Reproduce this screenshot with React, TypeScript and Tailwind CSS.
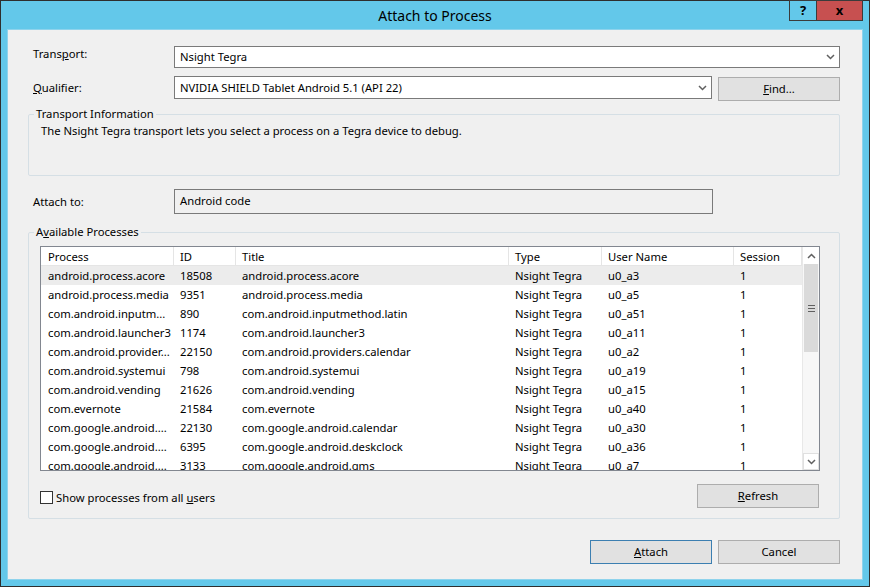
import React from 'react';

type Row = { proc: string; id: string; title: string; user: string };

const rows: Row[] = [
  { proc: 'android.process.acore', id: '18508', title: 'android.process.acore', user: 'u0_a3' },
  { proc: 'android.process.media', id: '9351', title: 'android.process.media', user: 'u0_a5' },
  { proc: 'com.android.inputm...', id: '890', title: 'com.android.inputmethod.latin', user: 'u0_a51' },
  { proc: 'com.android.launcher3', id: '1174', title: 'com.android.launcher3', user: 'u0_a11' },
  { proc: 'com.android.provider...', id: '22150', title: 'com.android.providers.calendar', user: 'u0_a2' },
  { proc: 'com.android.systemui', id: '798', title: 'com.android.systemui', user: 'u0_a19' },
  { proc: 'com.android.vending', id: '21626', title: 'com.android.vending', user: 'u0_a15' },
  { proc: 'com.evernote', id: '21584', title: 'com.evernote', user: 'u0_a40' },
  { proc: 'com.google.android....', id: '22130', title: 'com.google.android.calendar', user: 'u0_a30' },
  { proc: 'com.google.android....', id: '6395', title: 'com.google.android.deskclock', user: 'u0_a36' },
  { proc: 'com.google.android....', id: '3133', title: 'com.google.android.gms', user: 'u0_a7' },
];

const cols = ['w-[133px]', 'w-[62px]', 'w-[273px]', 'w-[93px]', 'w-[132px]', 'w-[68px]'];

const Chevron = ({ up = false }: { up?: boolean }) => (
  <svg width="9" height="6" viewBox="0 0 9 6" className={up ? 'rotate-180' : ''}>
    <path d="M1 1 L4.5 4.5 L8 1" fill="none" stroke="#606060" strokeWidth="1.5" />
  </svg>
);

const Btn = ({ children, primary = false }: { children: React.ReactNode; primary?: boolean }) => (
  <div
    className={`w-[122px] h-[24px] flex items-center justify-center bg-[#e1e1e1] border ${
      primary ? 'border-[#3c7fb1]' : 'border-[#adadad]'
    }`}
  >
    {children}
  </div>
);

export default function App() {
  return (
    <div className="relative w-[870px] h-[587px] bg-[#63c8ea] border border-[#2e2e2e] flex flex-col text-[11.25px] text-black font-['Segoe_UI','Noto_Sans',sans-serif]">
      {/* title bar */}
      <div className="h-[28px] flex items-center justify-center text-[14px]">Attach to Process</div>
      <div className="absolute top-[-1px] right-[6px] flex">
        <div className="w-[28px] h-[21px] border border-[#3b3b3b] flex items-center justify-center font-bold text-[13px] leading-none">
          ?
        </div>
        <div className="w-[46px] h-[21px] border border-l-0 border-[#3b3b3b] bg-[#c75050] flex items-center justify-center font-bold text-[13px] leading-none">
          x
        </div>
      </div>

      {/* client area */}
      <div className="mx-[6px] mb-[6px] flex-1 border border-[#8fd3ec] bg-[#f0f0f0] flex flex-col pl-[20px] pr-[22px] leading-[16px]">
        <div className="mt-[16px] h-[22px] flex">
          <div className="w-[146px] pl-[5px] pt-0">
            Trans<span className="underline">p</span>ort:
          </div>
          <div className="flex-1 bg-white border border-[#7a7a7a] flex items-center justify-between pl-[5px] pr-[4px]">
            <span>Nsight Tegra</span>
            <Chevron />
          </div>
        </div>

        <div className="mt-[8px] h-[23px] flex items-center">
          <div className="w-[146px] pl-[5px]">
            <span className="underline">Q</span>ualifier:
          </div>
          <div className="w-[538px] h-full bg-white border border-[#7a7a7a] flex items-center justify-between pl-[5px] pr-[4px]">
            <span>NVIDIA SHIELD Tablet Android 5.1 (API 22)</span>
            <Chevron />
          </div>
          <div className="ml-[6px] mt-[2px]">
            <Btn>
              <span className="underline">F</span>ind...
            </Btn>
          </div>
        </div>

        <fieldset className="mt-[7px] h-[70px] border border-[#d5dfe5] rounded-[2px]">
          <legend className="ml-[5px] px-[2px]">Transport Information</legend>
          <div className="pl-[12px] pt-[1px]">The Nsight Tegra transport lets you select a process on a Tegra device to debug.</div>
        </fieldset>

        <div className="mt-[13px] h-[25px] flex items-center">
          <div className="w-[146px] pl-[5px]">Attach to:</div>
          <div className="w-[539px] h-full border border-[#7a7a7a] flex items-center pl-[5px] pb-[2px]">Android code</div>
        </div>

        <fieldset className="mt-[10px] h-[295px] border border-[#d5dfe5] rounded-[2px] flex flex-col">
          <legend className="ml-[5px] px-[2px]">
            A<span className="underline">v</span>ailable Processes
          </legend>
          <div className="pl-[11px] pr-[19px] flex flex-col">
            <div className="mt-[6px] h-[225px] border border-[#828790] bg-white flex">
              <div className="flex-1 flex flex-col overflow-hidden">
                <div className="h-[19px] flex border-b border-[#e5e5e5] shrink-0">
                  {['Process', 'ID', 'Title', 'Type', 'User Name', 'Session'].map((h, i) => (
                    <div key={h} className={`${cols[i]} shrink-0 pl-[6px] border-r border-[#e5e5e5] flex items-center pt-[1px] ${i === 0 ? 'pl-[7px]' : ''}`}>
                      {h}
                    </div>
                  ))}
                </div>
                {rows.map((r, idx) => (
                  <div key={idx} className={`h-[19px] shrink-0 flex items-center whitespace-nowrap ${idx === 0 ? 'bg-[#ececec]' : ''}`}>
                    <div className={`${cols[0]} shrink-0 pl-[7px] overflow-hidden`}>{r.proc}</div>
                    <div className={`${cols[1]} shrink-0 pl-[6px]`}>{r.id}</div>
                    <div className={`${cols[2]} shrink-0 pl-[6px]`}>{r.title}</div>
                    <div className={`${cols[3]} shrink-0 pl-[6px]`}>Nsight Tegra</div>
                    <div className={`${cols[4]} shrink-0 pl-[6px]`}>{r.user}</div>
                    <div className={`${cols[5]} shrink-0 pl-[6px]`}>1</div>
                  </div>
                ))}
              </div>
              {/* scrollbar */}
              <div className="w-[17px] shrink-0 flex flex-col bg-[#f7f7f7] border-l border-[#e8e8e8]">
                <div className="h-[17px] flex items-center justify-center bg-white">
                  <Chevron up />
                </div>
                <div className="h-[88px] mx-[1px] bg-[#dadada] flex flex-col items-center justify-center gap-[2px]">
                  <div className="w-[7px] h-px bg-[#606060]" />
                  <div className="w-[7px] h-px bg-[#606060]" />
                  <div className="w-[7px] h-px bg-[#606060]" />
                </div>
                <div className="flex-1" />
                <div className="h-[17px] flex items-center justify-center bg-white border border-[#e0e0e0]">
                  <Chevron />
                </div>
              </div>
            </div>

            <div className="mt-[13px] h-[24px] flex items-center justify-between">
              <div className="flex items-center gap-[3px] pt-[3px]">
                <div className="w-[13px] h-[13px] bg-white border border-[#333]" />
                <span>
                  Show processes from all <span className="underline">u</span>sers
                </span>
              </div>
              <div className="mr-[1px]">
                <Btn>
                  <span className="underline">R</span>efresh
                </Btn>
              </div>
            </div>
          </div>
        </fieldset>

        <div className="mt-[21px] flex justify-end gap-[6px]">
          <Btn primary>
            <span className="underline">A</span>ttach
          </Btn>
          <Btn>Cancel</Btn>
        </div>
      </div>
    </div>
  );
}
